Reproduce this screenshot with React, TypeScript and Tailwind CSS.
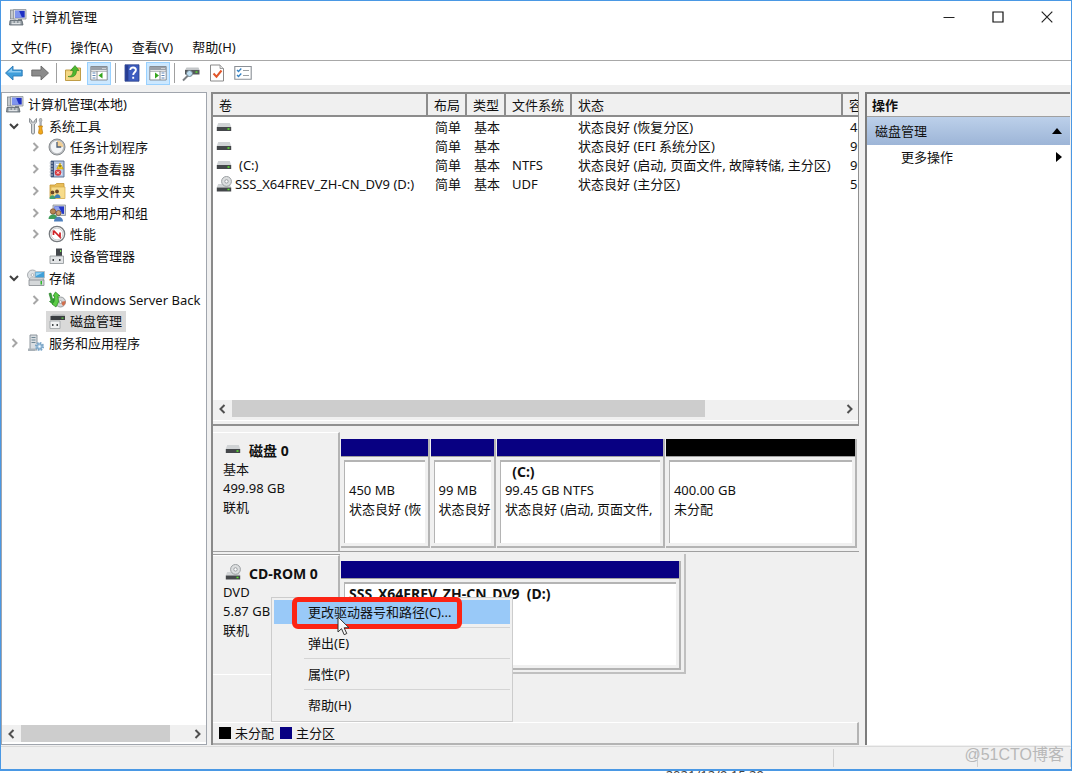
import type { ReactNode } from 'react';

type IconProps = { className?: string };

function ComputerIcon({ className = 'size-[18px]' }: IconProps) {
  return (
    <svg viewBox="0 0 18 18" className={className} aria-hidden="true">
      <rect x="1.500" y="2" width="5" height="9" fill="#c4c8cc" stroke="#7d858c" strokeWidth=".8" />
      <path d="M4.500 1.500h12.500v9.500H4.500z" fill="#d9dcdf" stroke="#8c9298" strokeWidth=".8" />
      <path d="M6 2.800h9.700v6.700H6z" fill="#1d2fc4" />
      <path d="M6 2.800h4l3 6.700H6z" fill="#7f95ee" />
      <path d="M9 11h4v1.500H9z" fill="#7d858c" />
      <path d="M1 12.500h12l1 4.500H.5z" fill="#8d969d" stroke="#59636b" strokeWidth=".8" />
      <path d="M2.500 14h2M6 14h2M9.500 14h2M2.500 15.700h9" stroke="#f4f6f7" strokeWidth="1" />
    </svg>
  );
}

function ToolsIcon() {
  return (
    <svg viewBox="0 0 18 18" className="size-[18px]" aria-hidden="true">
      <path
        d="M2.500 1.500v3.800l2 1.700V16c0 1.400 3 1.400 3 0V7l2-1.700V1.500L7.800 3v2H4.300V3z"
        fill="#d5d8da"
        stroke="#81878c"
        strokeWidth=".9"
      />
      <path d="M12.800 1.500h1.600l.6 2-.7 1.500v4h-1.400V5l-.7-1.500z" fill="#b9bdc0" stroke="#85898d" strokeWidth=".6" />
      <path d="M11.500 9h4l-.7 2 .9 5c0 1.500-4.200 1.500-4.200 0l.8-5z" fill="#f2a81c" stroke="#b97808" strokeWidth=".7" />
    </svg>
  );
}

function ClockIcon() {
  return (
    <svg viewBox="0 0 18 18" className="size-[18px]" aria-hidden="true">
      <circle cx="9" cy="9" r="8" fill="#b9bcbf" stroke="#7f8387" strokeWidth=".9" />
      <circle cx="9" cy="9" r="6.200" fill="#f3f5f7" />
      <path d="M9 9V2.800A6.200 6.200 0 0 1 15.200 9z" fill="#f2cf94" />
      <path d="M9 4v5h4.200" fill="none" stroke="#4a5d78" strokeWidth="1.300" />
    </svg>
  );
}

function EventIcon() {
  return (
    <svg viewBox="0 0 18 18" className="size-[18px]" aria-hidden="true">
      <path d="M3 1h13v16H3z" fill="#b4c6e4" stroke="#54698c" strokeWidth=".9" />
      <path d="M3 1h3v16H3z" fill="#3d527b" />
      <path d="M1.500 3H5M1.500 6H5M1.500 9H5M1.500 12H5M1.500 15H5" stroke="#b8bec8" strokeWidth="1.200" />
      <path d="M8 4.500h6M8 9h6M8 14h6" stroke="#fff" strokeWidth="1" />
      <path d="M12 3l3.300 6H8.700z" fill="#f7d326" stroke="#b59208" strokeWidth=".6" />
      <path d="M12 5v2.300" stroke="#333" strokeWidth="1" />
      <circle cx="10" cy="12.600" r="3.200" fill="#d93a3f" />
      <path d="M8.800 11.400l2.400 2.400M11.200 11.400l-2.400 2.400" stroke="#fff" strokeWidth=".9" />
    </svg>
  );
}

function SharedFolderIcon() {
  return (
    <svg viewBox="0 0 18 18" className="size-[18px]" aria-hidden="true">
      <path d="M2 3h5l1.500-1.500H16V16H2z" fill="#e9bd57" stroke="#c49532" strokeWidth=".8" />
      <path d="M3 5h14v11.500H3z" fill="#f7dc8c" stroke="#d2a94c" strokeWidth=".7" />
      <circle cx="4.500" cy="10.500" r="1.900" fill="#6b4a2a" />
      <circle cx="9" cy="9.500" r="1.900" fill="#6b4a2a" />
      <path d="M1.500 17c0-5 6-5 6 0z" fill="#41a16e" />
      <path d="M6.500 16c0-5 6-5 6 0z" fill="#3b7fb7" />
    </svg>
  );
}

function UsersIcon() {
  return (
    <svg viewBox="0 0 18 18" className="size-[18px]" aria-hidden="true">
      <path d="M5 1h12.500v10.500H5z" fill="#ced2d6" stroke="#8a9197" strokeWidth=".8" />
      <path d="M6.500 2.400h9.500v7.500H6.500z" fill="#2337c8" />
      <path d="M6.500 2.400h4l4 7.500h-8z" fill="#90a2ef" />
      <circle cx="5" cy="7.500" r="2.700" fill="#b98653" stroke="#6e4726" strokeWidth=".7" />
      <circle cx="10.500" cy="9" r="2.500" fill="#d1a273" stroke="#6e4726" strokeWidth=".7" />
      <path d="M.5 15c0-6 9-6 9 0z" fill="#3f9d5c" />
      <path d="M6 17.500c0-6.500 9-6.500 9 0z" fill="#4c7fbd" />
    </svg>
  );
}

function PerformanceIcon() {
  return (
    <svg viewBox="0 0 18 18" className="size-[18px]" aria-hidden="true">
      <circle cx="9" cy="9" r="7.700" fill="#f5f5f5" stroke="#777b7f" strokeWidth="1.300" />
      <circle cx="9" cy="9" r="5.900" fill="#fff" stroke="#b7babd" strokeWidth=".7" />
      <path d="M5.500 5.500v4.500M5.500 5.500L12 12V7.500" fill="none" stroke="#cf1f24" strokeWidth="1.700" />
    </svg>
  );
}

function DeviceIcon() {
  return (
    <svg viewBox="0 0 18 18" className="size-[18px]" aria-hidden="true">
      <path d="M8 1.500h6V10H8z" fill="#44484c" />
      <path d="M12 3h1.200v2H12z" fill="#7be35b" />
      <path d="M2 9h13.500v7.500H2z" fill="#e3e5e7" stroke="#8d9296" strokeWidth=".8" />
      <path d="M4.500 12h1.500v2H4.500zM11 12h1.500v2H11z" fill="#3c4043" />
    </svg>
  );
}

function StorageIcon() {
  return (
    <svg viewBox="0 0 18 18" className="size-[18px]" aria-hidden="true">
      <circle cx="5.500" cy="6" r="5" fill="#dfe2e4" stroke="#979ca1" strokeWidth=".8" />
      <circle cx="5.500" cy="6" r="1.400" fill="#fff" stroke="#979ca1" strokeWidth=".7" />
      <path d="M8 2.500h9.500V9H8z" fill="#3f9fd8" stroke="#b8c0c6" strokeWidth="1" />
      <path d="M9 3.500h7L9 7z" fill="#98d5f4" />
      <path d="M2 11l1-2h13l1 2z" fill="#eef0f1" stroke="#9ba0a4" strokeWidth=".7" />
      <path d="M2 11h15v5.500H2z" fill="#d5d8da" stroke="#84898d" strokeWidth=".8" />
      <path d="M13.500 12h1.500v3.500h-1.500z" fill="#2ebb2e" />
    </svg>
  );
}

function BackupIcon() {
  return (
    <svg viewBox="0 0 18 18" className="size-[18px]" aria-hidden="true">
      <circle cx="12.500" cy="11" r="5" fill="#d5d8da" stroke="#84898d" strokeWidth=".8" />
      <path d="M12.500 11l5-1a5 5 0 0 1-2.500 5z" fill="#d26e4d" />
      <circle cx="12.500" cy="11" r="1.400" fill="#fff" stroke="#84898d" strokeWidth=".7" />
      <path d="M1 2.500l2 7-1.500 1 4.500 3.500V7.500L4.500 8 3 2z" fill="#37a637" stroke="#1d761d" strokeWidth=".6" />
      <path d="M7.500 1L12 5h-2l.5 6L8 16l-4-3 2.500-3V5H5z" fill="#5ccc47" stroke="#24821c" strokeWidth=".7" />
    </svg>
  );
}

function DiskMgmtIcon() {
  return (
    <svg viewBox="0 0 18 18" className="size-[18px]" aria-hidden="true">
      <path d="M3 4l1.500-1.500h12L17 4z" fill="#b4b7b9" />
      <path d="M2.500 4H17v4H2.500z" fill="#3b3f42" />
      <path d="M13.500 5.500h2v1.200h-2z" fill="#66dd48" />
      <path d="M2 9h10v7.500H2z" fill="#f1f2f3" stroke="#9b9fa2" strokeWidth=".8" />
      <path d="M4 12h1.500v2H4zM8.500 12H10v2H8.500z" fill="#45494c" />
    </svg>
  );
}

function ServicesIcon() {
  return (
    <svg viewBox="0 0 18 18" className="size-[18px]" aria-hidden="true">
      <path d="M3 1h7v15H3z" fill="#d9dee2" stroke="#848d94" strokeWidth=".9" />
      <path d="M4.500 3.500h4M4.500 6h4M4.500 8.500h4" stroke="#6f8795" strokeWidth="1" />
      <path d="M1 14.500h7V17H1z" fill="#aab2b8" />
      <circle cx="12.500" cy="12.500" r="3.600" fill="#d7e8f5" stroke="#7ba6c9" strokeWidth="2" strokeDasharray="1.600 1.200" />
      <circle cx="12.500" cy="12.500" r="2.600" fill="#a9cbe6" stroke="#6a95b8" strokeWidth=".8" />
      <circle cx="12.500" cy="12.500" r="1" fill="#fff" />
    </svg>
  );
}

function DriveIcon() {
  return (
    <svg viewBox="0 0 16 16" className="size-4 shrink-0" aria-hidden="true">
      <path d="M.8 8l1.400-4h11.600l1.400 4z" fill="#d0d3d5" />
      <path d="M.8 8h14.400v4H.8z" fill="#44474a" />
      <path d="M11.500 9.200h2v1.600h-2z" fill="#5be32f" />
    </svg>
  );
}

function DiscDriveIcon() {
  return (
    <svg viewBox="0 0 16 16" className="size-4 shrink-0" aria-hidden="true">
      <path d="M.8 11.500L2.200 8h11.600l1.400 3.500z" fill="#d0d3d5" />
      <circle cx="10.500" cy="5.400" r="4.900" fill="#dcdedf" stroke="#9a9ea1" strokeWidth="1" />
      <circle cx="10.500" cy="5.400" r="1.700" fill="#fff" stroke="#9a9ea1" strokeWidth="1" />
      <path d="M.8 11.500h14.400v4H.8z" fill="#44474a" />
      <path d="M11.500 12.700h2v1.500h-2z" fill="#5be32f" />
    </svg>
  );
}

function ArrowIcon({ forward = false }: { forward?: boolean }) {
  return (
    <svg viewBox="0 0 18 18" className="size-[18px]" aria-hidden="true">
      {forward ? (
        <path d="M17.500 9L10 2v4H.8v6H10v4z" fill="#8b8b8b" stroke="#666" strokeWidth=".9" />
      ) : (
        <>
          <path d="M.5 9L8 2v4h9.200v6H8v4z" fill="#3f9edb" stroke="#2b78b5" strokeWidth=".9" />
          <path d="M2.500 8.500L7 4.200V7h9v1.500z" fill="#8ecbf2" />
        </>
      )}
    </svg>
  );
}

function UpFolderIcon() {
  return (
    <svg viewBox="0 0 18 18" className="size-[18px]" aria-hidden="true">
      <path d="M1.500 6h6l1.500-2h7.500v12.500h-15z" fill="#f1d27c" stroke="#b99439" strokeWidth=".9" />
      <path d="M2 8h14v8H2z" fill="#f3d884" />
      <path d="M4 12.500c3.500 0 5-2 5-6H6.500L11 1.500 15 6.500h-2.500c0 5-3 7.500-8.500 6z" fill="#4eb82f" stroke="#2d801a" strokeWidth=".6" />
    </svg>
  );
}

function PaneIcon({ right = false }: { right?: boolean }) {
  return (
    <svg viewBox="0 0 18 18" className="size-[18px]" aria-hidden="true">
      <path d="M.8 2.500h16.400v13.500H.8z" fill="#fff" stroke="#868c93" strokeWidth="1" />
      <path d="M1 3h16v3H1z" fill="#9aa0a8" />
      <path d="M12.500 4.500h1M14.500 4.500h1" stroke="#fff" strokeWidth="1" />
      <path d="M1 7.200h16" stroke="#868c93" strokeWidth=".8" />
      {right ? (
        <>
          <path d="M11 7v9" stroke="#868c93" />
          <path d="M6 8.500l4 3-4 3z" fill="#35a51d" />
          <path d="M12.500 9h3M12.500 11.500h3M12.500 14h3" stroke="#5c84b6" strokeWidth="1.100" />
        </>
      ) : (
        <>
          <path d="M7 7v9" stroke="#868c93" />
          <path d="M12.500 8.500l-4 3 4 3z" fill="#35a51d" />
          <path d="M2.500 9h3M2.500 11.500h3M2.500 14h3" stroke="#5c84b6" strokeWidth="1.100" />
        </>
      )}
    </svg>
  );
}

function HelpIcon() {
  return (
    <svg viewBox="0 0 18 18" className="size-[18px]" aria-hidden="true">
      <path d="M2 .8h14v16.400H2z" fill="#3d5dc0" stroke="#2a3f87" strokeWidth=".8" />
      <path d="M2.400 1.200h3v15.600h-3z" fill="#273d92" />
      <path d="M7.300 6c0-3.400 5.600-3.300 5.600 0 0 2.200-2.700 2.300-2.700 5M10.200 12.700v2" fill="none" stroke="#fff" strokeWidth="1.900" />
    </svg>
  );
}

function RescanIcon() {
  return (
    <svg viewBox="0 0 18 18" className="size-[18px]" aria-hidden="true">
      <path d="M3 6l1.500-2.500h12L17.500 6z" fill="#c4c7c9" />
      <path d="M3 6h14.500v4.500H3z" fill="#55595c" />
      <path d="M13.500 7.300h2v1.500h-2z" fill="#5be32f" />
      <path d="M1 16.500l5-5" stroke="#7c8084" strokeWidth="2" />
      <circle cx="7.500" cy="9.500" r="3" fill="#bfe0f3" stroke="#73818b" strokeWidth="1" />
    </svg>
  );
}

function CheckPageIcon() {
  return (
    <svg viewBox="0 0 18 18" className="size-[18px]" aria-hidden="true">
      <path d="M2.500 1h9.500l3.500 3.500V17h-13z" fill="#fff" stroke="#8a8a8a" strokeWidth="1" />
      <path d="M12 1v3.500h3.500" fill="#e4e4e4" stroke="#8a8a8a" strokeWidth=".8" />
      <path d="M5.500 9.500l3 3.200 5-6.200" fill="none" stroke="#e2572b" strokeWidth="2" />
    </svg>
  );
}

function ListIcon() {
  return (
    <svg viewBox="0 0 18 18" className="size-[18px]" aria-hidden="true">
      <path d="M.8 2.500h16.400v12.800H.8z" fill="#fff" stroke="#8b9096" strokeWidth="1.100" />
      <path d="M9 6.500h6M9 11.500h6" stroke="#9ba0a5" strokeWidth="1.200" />
      <path d="M3 6l1.500 1.500L7.300 4.500M3 11l1.500 1.500 2.800-3" fill="none" stroke="#3683c4" strokeWidth="1.300" />
    </svg>
  );
}

function Chevron({ dir }: { dir: 'left' | 'right' | 'down' }) {
  const paths = {
    left: 'M7.500 2L3.500 6l4 4',
    right: 'M4.500 2l4 4-4 4',
    down: 'M2 4l4 4 4-4',
  };
  return (
    <svg viewBox="0 0 12 12" className="size-3 fill-none" aria-hidden="true">
      <path d={paths[dir]} stroke="currentColor" strokeWidth="2" />
    </svg>
  );
}

function ScrollBar({ thumb, label }: { thumb: string; label: string }) {
  return (
    <div className="flex h-[17px] shrink-0 items-stretch bg-[#f0f0f0] text-[#505050]">
      <button type="button" aria-label={`${label}向左`} className="flex w-[19px] items-center justify-center">
        <Chevron dir="left" />
      </button>
      <div className="flex-1">
        <div className={`h-full bg-[#cdcdcd] ${thumb}`} />
      </div>
      <button type="button" aria-label={`${label}向右`} className="flex w-[19px] items-center justify-center">
        <Chevron dir="right" />
      </button>
    </div>
  );
}

const menus = ['文件(F)', '操作(A)', '查看(V)', '帮助(H)'];

type Tool = { label: string; icon: ReactNode; active?: boolean };

const toolGroups: Tool[][] = [
  [
    { label: '后退', icon: <ArrowIcon /> },
    { label: '前进', icon: <ArrowIcon forward /> },
  ],
  [
    { label: '上移一级', icon: <UpFolderIcon /> },
    { label: '显示控制台树', icon: <PaneIcon />, active: true },
  ],
  [
    { label: '帮助', icon: <HelpIcon /> },
    { label: '显示操作窗格', icon: <PaneIcon right />, active: true },
  ],
  [
    { label: '重新扫描磁盘', icon: <RescanIcon /> },
    { label: '属性', icon: <CheckPageIcon /> },
    { label: '设置', icon: <ListIcon /> },
  ],
];

type TreeNode = {
  label: string;
  icon: ReactNode;
  level: 0 | 1 | 2;
  state?: 'open' | 'closed';
  selected?: boolean;
};

const tree: TreeNode[] = [
  { label: '计算机管理(本地)', icon: <ComputerIcon />, level: 0 },
  { label: '系统工具', icon: <ToolsIcon />, level: 1, state: 'open' },
  { label: '任务计划程序', icon: <ClockIcon />, level: 2, state: 'closed' },
  { label: '事件查看器', icon: <EventIcon />, level: 2, state: 'closed' },
  { label: '共享文件夹', icon: <SharedFolderIcon />, level: 2, state: 'closed' },
  { label: '本地用户和组', icon: <UsersIcon />, level: 2, state: 'closed' },
  { label: '性能', icon: <PerformanceIcon />, level: 2, state: 'closed' },
  { label: '设备管理器', icon: <DeviceIcon />, level: 2 },
  { label: '存储', icon: <StorageIcon />, level: 1, state: 'open' },
  { label: 'Windows Server Back', icon: <BackupIcon />, level: 2, state: 'closed' },
  { label: '磁盘管理', icon: <DiskMgmtIcon />, level: 2, selected: true },
  { label: '服务和应用程序', icon: <ServicesIcon />, level: 1, state: 'closed' },
];

const indent = ['pl-0.5', 'pl-[5px]', 'pl-[26px]'];

const columns = [
  { name: '卷', width: 'w-[215px]' },
  { name: '布局', width: 'w-[39px]' },
  { name: '类型', width: 'w-[39px]' },
  { name: '文件系统', width: 'w-[66px]' },
  { name: '状态', width: 'w-[271px]' },
  { name: '容量', width: 'w-[70px]' },
];

const volumes = [
  { name: '', fs: '', status: '状态良好 (恢复分区)', size: '450 MB' },
  { name: '', fs: '', status: '状态良好 (EFI 系统分区)', size: '99 MB' },
  { name: '(C:)', fs: 'NTFS', status: '状态良好 (启动, 页面文件, 故障转储, 主分区)', size: '99.45 GB' },
  { name: 'SSS_X64FREV_ZH-CN_DV9 (D:)', fs: 'UDF', status: '状态良好 (主分区)', size: '5.87 GB', disc: true },
];

type PartitionProps = { name?: string; size?: string; status?: string; free?: boolean };

const partitions: PartitionProps[] = [
  { size: '450 MB', status: '状态良好 (恢' },
  { size: '99 MB', status: '状态良好' },
  { name: '  (C:)', size: '99.45 GB NTFS', status: '状态良好 (启动, 页面文件,' },
  { size: '400.00 GB', status: '未分配', free: true },
];

const contextItems = ['更改驱动器号和路径(C)...', '弹出(E)', '属性(P)', '帮助(H)'];

function TitleBar() {
  return (
    <header className="flex h-8 shrink-0 items-center bg-white pl-2">
      <ComputerIcon />
      <h1 className="ml-[5px] flex-1">计算机管理</h1>
      <button type="button" aria-label="最小化" className="flex h-full w-[49px] items-center justify-center">
        <svg viewBox="0 0 12 12" className="size-3"><path d="M.5 6.500h11" stroke="#222" /></svg>
      </button>
      <button type="button" aria-label="最大化" className="flex h-full w-[49px] items-center justify-center">
        <svg viewBox="0 0 12 12" className="size-3"><path d="M1 1h10v10H1z" fill="none" stroke="#111" strokeWidth="1.200" /></svg>
      </button>
      <button type="button" aria-label="关闭" className="flex h-full w-[49px] items-center justify-center">
        <svg viewBox="0 0 12 12" className="size-3"><path d="M.7.7l10.600 10.600M11.300.7L.7 11.300" stroke="#222" strokeWidth="1.200" /></svg>
      </button>
    </header>
  );
}

function Toolbar() {
  return (
    <div className="flex h-[25px] shrink-0 items-center gap-0.5 border-t border-[#a8a8a8] bg-white pl-px">
      {toolGroups.map((group, i) => (
        <div key={i} className="flex items-center gap-0.5">
          {i > 0 && <div className="mx-0.5 h-5 w-px bg-[#a0a0a0]" />}
          {group.map(({ label, icon, active }) => (
            <button
              key={label}
              type="button"
              aria-label={label}
              className={`flex h-[23px] w-6 items-center justify-center ${active ? 'border border-[#99d1ff] bg-[#cce8ff]' : ''}`}
            >
              {icon}
            </button>
          ))}
        </div>
      ))}
    </div>
  );
}

function TreePane() {
  return (
    <nav className="flex w-[206px] shrink-0 flex-col border border-[#a0a5ad] bg-white">
      <ul className="grid h-[261px] auto-rows-fr overflow-hidden">
        {tree.map(({ label, icon, level, state, selected }) => (
          <li key={label} className={`flex items-center ${indent[level]}`}>
            {level > 0 && (
              <span className={`mr-1 flex w-3.5 shrink-0 justify-center ${state === 'open' ? 'text-[#404040]' : 'text-[#a6a6a6]'}`}>
                {state && <Chevron dir={state === 'open' ? 'down' : 'right'} />}
              </span>
            )}
            <a
              href="#"
              className={`flex h-full shrink-0 items-center gap-1 pr-1 pl-0.5 whitespace-nowrap ${selected ? 'bg-[#d9d9d9]' : ''}`}
            >
              {icon}
              {label}
            </a>
          </li>
        ))}
      </ul>
      <div className="mt-auto pb-0.5">
        <ScrollBar label="树" thumb="w-[90%]" />
      </div>
    </nav>
  );
}

function VolumeList() {
  return (
    <section className="flex h-[332px] shrink-0 flex-col border-r border-b-2 border-[#909090] bg-[#f0f0f0]">
      <div className="min-h-0 flex-1 overflow-hidden bg-white">
        <table className="w-[700px] table-fixed border-separate border-spacing-0">
          <thead>
            <tr>
              {columns.map(({ name, width }) => (
                <th
                  key={name}
                  scope="col"
                  className={`${width} h-[23px] border-r-2 border-b-2 border-[#8c8c8c] bg-[#f0f0f0] p-0 pl-1.5 text-left font-normal whitespace-nowrap`}
                >
                  {name}
                </th>
              ))}
            </tr>
          </thead>
          <tbody>
            {volumes.map(({ name, fs, status, size, disc }) => (
              <tr key={status} className="h-[19px] whitespace-nowrap">
                <td className="p-0 pl-[3px]">
                  <span className="flex h-[19px] items-center">
                    {disc ? <DiscDriveIcon /> : <DriveIcon />}
                    <span className={disc ? 'ml-[3px]' : 'ml-[7px]'}>{name}</span>
                  </span>
                </td>
                <td className="p-0 pl-[7px]">简单</td>
                <td className="p-0 pl-[7px]">基本</td>
                <td className="p-0 pl-1.5">{fs}</td>
                <td className="p-0 pl-1.5">{status}</td>
                <td className="p-0 pl-[7px]">{size}</td>
              </tr>
            ))}
          </tbody>
        </table>
      </div>
      <ScrollBar label="卷列表" thumb="w-[78%]" />
      <div className="mt-[3px] h-1 border-t border-white" />
    </section>
  );
}

function DiskLabel({ name, kind, size, icon }: { name: string; kind: string; size: string; icon: ReactNode }) {
  return (
    <div className="h-[119px] w-[127px] shrink-0 border-t border-r-2 border-t-white border-r-[#b4b4b4] pt-2 pl-2.5 leading-[19px]">
      <div className="flex pl-0.5">
        {icon}
        <h2 className="ml-2 text-sm leading-[19px] font-bold">{name}</h2>
      </div>
      <p>{kind}</p>
      <p>{size}</p>
      <p>联机</p>
    </div>
  );
}

function Partition({ name, size, status, free }: PartitionProps) {
  return (
    <div className="flex h-[109px] min-w-0 flex-col border-r-2 border-b-2 border-[#b4b4b4]">
      <div className={`h-[18px] shrink-0 border-b border-[#a0a0a0] ${free ? 'bg-black' : 'bg-[#080082]'}`} />
      <div className="flex min-h-0 flex-1 p-[3px]">
        <div className="min-w-0 flex-1 overflow-hidden border-t-2 border-l border-[#b4b4b4] bg-white pl-1 leading-[19px] whitespace-pre">
          <p className="h-[19px] text-sm leading-[19px] font-bold">{name}</p>
          <p>{size}</p>
          <p>{status}</p>
        </div>
      </div>
    </div>
  );
}

function DiskMap() {
  return (
    <section className="flex min-h-0 flex-1 flex-col pt-1.5">
      <div className="flex border-b border-[#a0a0a0]">
        <DiskLabel name="磁盘 0" kind="基本" size="499.98 GB" icon={<DriveIcon />} />
        <div className="grid min-w-0 flex-1 grid-cols-[88fr_65fr_167fr_190fr] gap-x-px pt-[7px] pr-0.5 pl-px">
          {partitions.map((p) => (
            <Partition key={p.size} {...p} />
          ))}
        </div>
      </div>
      <div className="mt-0.5 flex">
        <div className="border-y border-t-[#a0a0a0] border-b-white">
          <DiskLabel name="CD-ROM 0" kind="DVD" size="5.87 GB" icon={<DiscDriveIcon />} />
        </div>
        <div className="grid w-[346px] grid-cols-1 self-start border-r-2 border-b-2 border-[#c0c0c0] pt-[7px] pr-[3px] pb-0.5 pl-px">
          <Partition name="SSS_X64FREV_ZH-CN_DV9  (D:)" />
        </div>
      </div>
      <footer className="mt-auto flex h-[23px] items-center gap-1 border-t border-r-2 border-b-2 border-t-white border-r-[#b4b4b4] border-b-[#b4b4b4] pl-1.5">
        <span className="size-3 bg-black" />
        <span>未分配</span>
        <span className="ml-0.5 size-3 bg-[#080082]" />
        <span>主分区</span>
      </footer>
    </section>
  );
}

function ActionsPane() {
  return (
    <aside className="w-[205px] shrink-0 border-t-2 border-l-2 border-[#7c7c7c] bg-white">
      <h2 className="flex h-[23px] items-center border-b border-[#a0a0a0] bg-[#f0f0f0] pl-[5px] font-bold">操作</h2>
      <button
        type="button"
        className="flex h-7 w-full items-center justify-between bg-linear-to-b from-[#bcd0ea] to-[#9db5d7] pr-2 pl-2"
      >
        磁盘管理
        <svg viewBox="0 0 10 6" className="h-1.5 w-2.5" aria-hidden="true"><path d="M0 6l5-6 5 6z" /></svg>
      </button>
      <button type="button" className="flex h-6 w-full items-center justify-between pr-2 pl-[34px]">
        更多操作
        <svg viewBox="0 0 6 10" className="h-2.5 w-1.5" aria-hidden="true"><path d="M0 0l6 5-6 5z" /></svg>
      </button>
    </aside>
  );
}

function ContextMenu() {
  return (
    <div className="absolute top-[597px] left-[271px] w-[242px] border border-[#cccccc] bg-[#f0f0f0] p-0.5 pb-1">
      <ul>
        {contextItems.map((item, i) => (
          <li key={item}>
            {i > 0 && <div className="my-[3px] ml-[30px] h-px bg-[#d4d4d4]" />}
            <button
              type="button"
              className={`flex h-6 w-full items-center pl-[34px] ${i === 0 ? 'bg-[#99c9f8]' : ''}`}
            >
              {item}
            </button>
          </li>
        ))}
      </ul>
      <div className="absolute -top-px left-5 h-8 w-[170px] rounded-md border-[5px] border-[#fc2414]" />
      <svg viewBox="0 0 13 20" className="absolute top-[18px] left-[65px] h-5 w-[13px]" aria-hidden="true">
        <path d="M1 1v15l3.500-3.300 2.700 6 2.600-1.200-2.700-5.700H12z" fill="#f7f7f7" stroke="#333" strokeWidth="1" />
      </svg>
    </div>
  );
}

export default function App() {
  return (
    <div className="relative flex h-screen min-h-[770px] flex-col overflow-hidden bg-[#f0f0f0] font-['Noto_Sans','Noto_Sans_CJK_SC',sans-serif] text-[13px] leading-[18px] text-[#111]">
      <div className="flex min-h-0 flex-1 flex-col border border-b-2 border-[#4a98e4]">
        <TitleBar />
        <div className="flex h-[27px] shrink-0 items-center gap-[19px] bg-white pl-2.5">
          {menus.map((menu) => (
            <button key={menu} type="button">
              {menu}
            </button>
          ))}
        </div>
        <Toolbar />
        <main className="flex min-h-0 flex-1 gap-1 pt-[7px] pr-px">
          <TreePane />
          <div className="mr-0.5 flex min-w-0 flex-1 flex-col border-t-2 border-l-2 border-[#8a8a8a]">
            <VolumeList />
            <DiskMap />
          </div>
          <ActionsPane />
        </main>
        <footer className="mt-px flex h-[23px] shrink-0 justify-end border-t border-[#dadada] py-0.5">
          <div className="w-36 border-l border-[#d0d0d0]" />
          <div className="w-[94px] border-x border-[#d0d0d0]" />
        </footer>
      </div>
      <div className="flex h-0.5 shrink-0 justify-end overflow-hidden bg-white pr-[308px] leading-2 text-[#444]">
        2021/12/9 15:29
      </div>
      <ContextMenu />
      <div className="absolute right-2 bottom-2 font-['Liberation_Sans','Noto_Sans_CJK_SC',sans-serif] text-base leading-5 text-[#b8b8b8]">
        @51CTO博客
      </div>
    </div>
  );
}
